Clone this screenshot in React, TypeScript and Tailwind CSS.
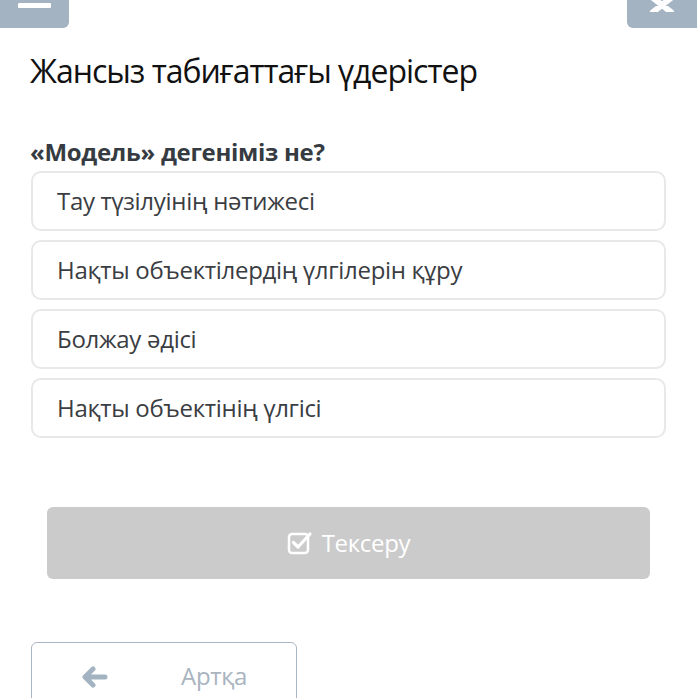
import { useState } from 'react'

const OPTIONS = [
  'Тау түзілуінің нәтижесі',
  'Нақты объектілердің үлгілерін құру',
  'Болжау әдісі',
  'Нақты объектінің үлгісі',
]

export default function App() {
  const [picked, setPicked] = useState<number | null>(null)

  return (
    <div
      className="relative w-[697px] h-[698px] overflow-hidden bg-white"
      style={{ fontFamily: '"Open Sans", "Noto Sans", sans-serif' }}
    >
      {/* top bar buttons, cut off at the top edge */}
      <div className="flex justify-between h-[28px]">
        <button className="w-[69px] h-[28px] bg-[#a3b3c2] rounded-br-[6px] flex justify-center">
          <span className="mt-[3px] w-[33px] h-[5px] bg-white rounded-[1px]" />
        </button>
        <button className="w-[70px] h-[28px] bg-[#a3b3c2] rounded-bl-[6px] flex justify-center overflow-hidden">
          <svg width="26" height="14" viewBox="0 0 26 14" className="-mt-[2px]">
            <path d="M4 0 L13 7 L22 0 M4 14 L13 7 L22 14" stroke="#fff" strokeWidth="6" strokeLinecap="round" fill="none" />
          </svg>
        </button>
      </div>

      <div className="px-[30px]">
        <h1 className="mt-[23px] text-[32px] leading-[40px] text-[#111] tracking-[-1px]">
          Жансыз табиғаттағы үдерістер
        </h1>

        <h2 className="mt-[47px] text-[24px] leading-[28px] font-bold text-[#363b42] tracking-[-0.3px]">
          «Модель» дегеніміз не?
        </h2>

        <div className="mt-[5px] flex flex-col gap-[9px] pl-px pr-[1px] w-[637px]">
          {OPTIONS.map((o, i) => (
            <button
              key={o}
              onClick={() => setPicked(i)}
              className={`h-[60px] rounded-[10px] border-2 text-left pl-[24px] text-[24px] text-[#3a3d42] tracking-[-0.3px] ${
                picked === i ? 'border-[#a3b3c2]' : 'border-[#e8e8e8]'
              }`}
            >
              {o}
            </button>
          ))}
        </div>
      </div>

      <div className="px-[47px] mt-[69px]">
        <button className="w-full h-[72px] rounded-[6px] bg-[#cbcbcb] flex items-center justify-center gap-[9px] text-white text-[24px] tracking-[-0.3px]">
          <svg width="26" height="24" viewBox="0 0 26 24">
            <rect x="2" y="3" width="19" height="19" rx="3" fill="none" stroke="#fff" strokeWidth="2.5" />
            <path d="M6.5 11.5 L11 16 L23 3" fill="none" stroke="#fff" strokeWidth="3.2" strokeLinecap="round" strokeLinejoin="round" />
          </svg>
          <span>Тексеру</span>
        </button>
      </div>

      <div className="px-[31px] mt-[63px]">
        <button className="w-[266px] h-[70px] rounded-[6px] border border-[#a9b7c4] flex items-start pt-[20px] text-[#a9b4bf] text-[24px]">
          <svg width="26" height="22" viewBox="0 0 26 22" className="ml-[50px] mt-[3px]">
            <path d="M11 3 L3 11 L11 19 M4 11 L23 11" fill="none" stroke="#a3b3c2" strokeWidth="5" strokeLinecap="round" strokeLinejoin="round" />
          </svg>
          <span className="ml-[73px] leading-[26px] tracking-[-0.3px]">Артқа</span>
        </button>
      </div>
    </div>
  )
}
